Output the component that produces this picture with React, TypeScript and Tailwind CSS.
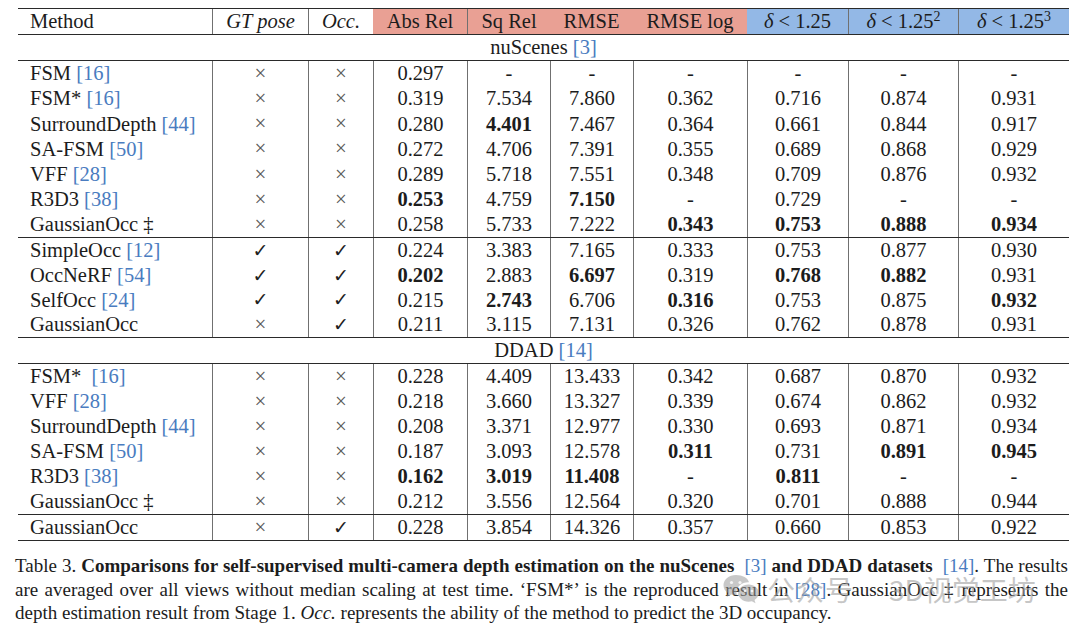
import React from "react";

type Cell = string | { v: string; b?: boolean };

type Row = {
  name: string;
  cite?: string;
  gt: boolean;
  occ: boolean;
  vals: Cell[];
};

const cols =
  "grid grid-cols-[194px_96px_65px_94px_83px_83px_114px_101px_110px_111px]";

const B = (v: string) => ({ v, b: true });

const nuScenesA: Row[] = [
  { name: "FSM", cite: "16", gt: false, occ: false, vals: ["0.297", "-", "-", "-", "-", "-", "-"] },
  { name: "FSM*", cite: "16", gt: false, occ: false, vals: ["0.319", "7.534", "7.860", "0.362", "0.716", "0.874", "0.931"] },
  { name: "SurroundDepth", cite: "44", gt: false, occ: false, vals: ["0.280", B("4.401"), "7.467", "0.364", "0.661", "0.844", "0.917"] },
  { name: "SA-FSM", cite: "50", gt: false, occ: false, vals: ["0.272", "4.706", "7.391", "0.355", "0.689", "0.868", "0.929"] },
  { name: "VFF", cite: "28", gt: false, occ: false, vals: ["0.289", "5.718", "7.551", "0.348", "0.709", "0.876", "0.932"] },
  { name: "R3D3", cite: "38", gt: false, occ: false, vals: [B("0.253"), "4.759", B("7.150"), "-", "0.729", "-", "-"] },
  { name: "GaussianOcc ‡", gt: false, occ: false, vals: ["0.258", "5.733", "7.222", B("0.343"), B("0.753"), B("0.888"), B("0.934")] },
];

const nuScenesB: Row[] = [
  { name: "SimpleOcc", cite: "12", gt: true, occ: true, vals: ["0.224", "3.383", "7.165", "0.333", "0.753", "0.877", "0.930"] },
  { name: "OccNeRF", cite: "54", gt: true, occ: true, vals: [B("0.202"), "2.883", B("6.697"), "0.319", B("0.768"), B("0.882"), "0.931"] },
  { name: "SelfOcc", cite: "24", gt: true, occ: true, vals: ["0.215", B("2.743"), "6.706", B("0.316"), "0.753", "0.875", B("0.932")] },
  { name: "GaussianOcc", gt: false, occ: true, vals: ["0.211", "3.115", "7.131", "0.326", "0.762", "0.878", "0.931"] },
];

const ddadA: Row[] = [
  { name: "FSM*\u00a0", cite: "16", gt: false, occ: false, vals: ["0.228", "4.409", "13.433", "0.342", "0.687", "0.870", "0.932"] },
  { name: "VFF", cite: "28", gt: false, occ: false, vals: ["0.218", "3.660", "13.327", "0.339", "0.674", "0.862", "0.932"] },
  { name: "SurroundDepth", cite: "44", gt: false, occ: false, vals: ["0.208", "3.371", "12.977", "0.330", "0.693", "0.871", "0.934"] },
  { name: "SA-FSM", cite: "50", gt: false, occ: false, vals: ["0.187", "3.093", "12.578", B("0.311"), "0.731", B("0.891"), B("0.945")] },
  { name: "R3D3", cite: "38", gt: false, occ: false, vals: [B("0.162"), B("3.019"), B("11.408"), "-", B("0.811"), "-", "-"] },
  { name: "GaussianOcc ‡", gt: false, occ: false, vals: ["0.212", "3.556", "12.564", "0.320", "0.701", "0.888", "0.944"] },
];

const ddadB: Row[] = [
  { name: "GaussianOcc", gt: false, occ: true, vals: ["0.228", "3.854", "14.326", "0.357", "0.660", "0.853", "0.922"] },
];

const Cite = ({ n }: { n: string }) => (
  <span className="font-normal text-[#4a7cc0]">[{n}]</span>
);

const Mark = ({ on }: { on: boolean }) =>
  on ? (
    <span className="font-['DejaVu_Sans'] text-[19px] text-[#1e1e1e]">✓</span>
  ) : (
    <span className="text-[21px] text-[#5a5a5a]">×</span>
  );

const cellLine = "border-l border-[#707070]";

const DataRow = ({ r }: { r: Row }) => (
  <div className={`${cols} flex-1`}>
    <div className="flex items-center pl-3 whitespace-nowrap">
      {r.name}
      {r.cite && (
        <>
          &nbsp;
          <Cite n={r.cite} />
        </>
      )}
    </div>
    <div className={`${cellLine} flex items-center justify-center`}>
      <Mark on={r.gt} />
    </div>
    <div className={`${cellLine} flex items-center justify-center`}>
      <Mark on={r.occ} />
    </div>
    {r.vals.map((c, i) => {
      const v = typeof c === "string" ? c : c.v;
      const bold = typeof c !== "string" && c.b;
      return (
        <div
          key={i}
          className={`${cellLine} flex items-center justify-center ${bold ? "font-bold" : ""}`}
        >
          {v}
        </div>
      );
    })}
  </div>
);

const Group = ({ rows, h }: { rows: Row[]; h: string }) => (
  <div className={`flex flex-col border-b border-[#2a2a2a] ${h}`}>
    {rows.map((r, i) => (
      <DataRow key={i} r={r} />
    ))}
  </div>
);

const SectionRow = ({ label, cite }: { label: string; cite: string }) => (
  <div className="flex h-[26px] items-center justify-center border-b border-[#2a2a2a]">
    {label}&nbsp;
    <Cite n={cite} />
  </div>
);

const Delta = ({ p }: { p?: string }) => (
  <span className="whitespace-nowrap">
    <i>δ</i>&nbsp;&lt;&nbsp;1.25
    {p && <sup className="text-[14px]">{p}</sup>}
  </span>
);

const WeChatIcon = () => (
  <svg width="38" height="32" viewBox="0 0 38 32" fill="none">
    <path
      d="M14 2C6.8 2 1.5 6.6 1.5 12.2c0 3.2 1.7 5.9 4.4 7.8l-1.2 4 4.5-2.4c1.5.4 3.1.7 4.8.7h.9c-.3-1-.5-2-.5-3 0-5.6 5.3-10 11.7-10h.9C25.9 5 20.5 2 14 2z"
      fill="#9b9b9b"
      fillOpacity="0.55"
    />
    <path
      d="M26.5 11.5c-5.7 0-10.3 3.8-10.3 8.6s4.6 8.6 10.3 8.6c1.2 0 2.3-.2 3.4-.5l3.6 2-1-3.2c2.6-1.6 4.3-4.1 4.3-6.9 0-4.8-4.6-8.6-10.3-8.6z"
      fill="#9b9b9b"
      fillOpacity="0.55"
    />
    <circle cx="9.5" cy="9.5" r="1.6" fill="#ffffff" fillOpacity="0.8" />
    <circle cx="18" cy="9.5" r="1.6" fill="#ffffff" fillOpacity="0.8" />
    <circle cx="23" cy="18" r="1.3" fill="#ffffff" fillOpacity="0.8" />
    <circle cx="30" cy="18" r="1.3" fill="#ffffff" fillOpacity="0.8" />
  </svg>
);

export default function App() {
  return (
    <div className="relative w-[1080px] h-[631px] bg-white font-['Liberation_Serif',serif] text-[#1c1c1c] overflow-hidden">
      <div className="pt-[8px] pl-[18px]">
        <div className="w-[1051px] text-[20.5px] leading-none">
          {/* header */}
          <div className={`${cols} h-[27px] border-t border-b border-[#2a2a2a]`}>
            <div className="flex items-center pl-3">Method</div>
            <div className={`${cellLine} flex items-center justify-center italic`}>
              GT pose
            </div>
            <div className={`${cellLine} flex items-center justify-center italic`}>
              Occ.
            </div>
            <div className="flex items-center justify-center bg-[#e9a094]">Abs Rel</div>
            <div className={`${cellLine} flex items-center justify-center bg-[#e9a094]`}>
              Sq Rel
            </div>
            <div className="flex items-center justify-center bg-[#e9a094]">RMSE</div>
            <div className="flex items-center justify-center bg-[#e9a094]">RMSE log</div>
            <div className="flex items-center justify-center bg-[#93b8e6]">
              <Delta />
            </div>
            <div className={`${cellLine} flex items-center justify-center bg-[#93b8e6]`}>
              <Delta p="2" />
            </div>
            <div className={`${cellLine} flex items-center justify-center bg-[#93b8e6]`}>
              <Delta p="3" />
            </div>
          </div>

          <SectionRow label="nuScenes" cite="3" />
          <Group rows={nuScenesA} h="h-[177px]" />
          <Group rows={nuScenesB} h="h-[100px]" />
          <SectionRow label="DDAD" cite="14" />
          <Group rows={ddadA} h="h-[151px]" />
          <Group rows={ddadB} h="h-[26px]" />
        </div>
      </div>

      {/* caption */}
      <div className="mt-[13px] px-[15px] w-[1083px] text-[19px] leading-[23.5px]">
        <div className="text-justify [text-align-last:justify] whitespace-nowrap">
          Table 3.{" "}
          <b>
            Comparisons for self-supervised multi-camera depth estimation on the
            nuScenes&nbsp; <Cite n="3" /> and DDAD datasets&nbsp; <Cite n="14" />
          </b>
          . The results
        </div>
        <div className="text-justify [text-align-last:justify] whitespace-nowrap">
          are averaged over all views without median scaling at test time. ‘FSM*’
          is the reproduced result in <Cite n="28" />. GaussianOcc ‡ represents the
        </div>
        <div>
          depth estimation result from Stage 1. <i>Occ.</i> represents the ability
          of the method to predict the 3D occupancy.
        </div>
      </div>

      {/* watermark overlay */}
      <div className="absolute left-[722px] top-[573px] flex items-center pointer-events-none">
        <WeChatIcon />
        <span className="ml-[7px] font-['Noto_Sans_CJK_SC',sans-serif] text-[28px] leading-none text-[#a0a0a0]/60 tracking-[1px]">
          公众号
        </span>
        <span className="ml-[35px] font-['Noto_Sans_CJK_SC',sans-serif] text-[28px] leading-none text-[#a0a0a0]/60">
          3D视觉工坊
        </span>
      </div>
    </div>
  );
}
